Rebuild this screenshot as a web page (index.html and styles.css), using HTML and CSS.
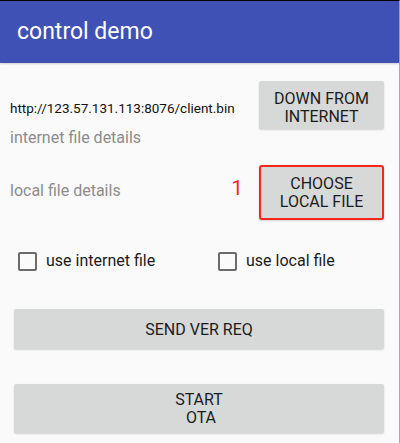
FILE: index.html
```html
<!DOCTYPE html>
<html>
<head>
<meta charset="utf-8">
<link rel="stylesheet" href="styles.css">
</head>
<body>
<div class="screen">
  <header class="appbar">control demo</header>
  <main class="content">
    <section class="row row-net">
      <div class="info">
        <div class="url">http://123.57.131.113:8076/client.bin</div>
        <div class="detail detail-net">internet file details</div>
      </div>
      <button class="btn btn-side">DOWN FROM<br>INTERNET</button>
    </section>
    <section class="row row-local">
      <div class="detail detail-local">local file details</div>
      <span class="mark">1</span>
      <button class="btn btn-side btn-marked">CHOOSE<br>LOCAL FILE</button>
    </section>
    <section class="checks">
      <label class="check"><span class="box"></span><span class="check-label">use internet file</span></label>
      <label class="check"><span class="box"></span><span class="check-label">use local file</span></label>
    </section>
    <button class="btn btn-wide btn-send">SEND VER REQ</button>
    <button class="btn btn-wide btn-ota">START<br>&nbsp;OTA</button>
  </main>
</div>
</body>
</html>
```
FILE: styles.css
```css
html, body {
  margin: 0;
  padding: 0;
  background: #fafafa;
}
body {
  font-family: Roboto, "Noto Sans", sans-serif;
  color: #1c1c1c;
  width: 400px;
  height: 443px;
  overflow: hidden;
}
.screen {
  box-sizing: border-box;
  width: 400px;
  height: 443px;
  border-top: 1px solid #000;
  border-right: 1px solid #9aabd0;
  background: #fafafa;
}
.appbar {
  height: 62px;
  background: #3f51b5;
  color: #fff;
  font-size: 23px;
  line-height: 62px;
  padding-left: 17px;
  box-shadow: 0 1px 2px rgba(0, 0, 0, 0.18);
  position: relative;
}
.content {
  display: flex;
  flex-direction: column;
  padding: 0 15px 0 10px;
}
.row {
  display: flex;
  align-items: flex-start;
}
.row-net {
  margin-top: 18px;
}
.info {
  flex: 1;
  margin-top: 19px;
}
.url {
  font-size: 13.5px;
  line-height: 16px;
  color: #111;
}
.detail {
  font-size: 16px;
  line-height: 20px;
  color: #8c8c8c;
}
.detail-net {
  margin-top: 12px;
}
.row-local {
  margin-top: 17px;
}
.detail-local {
  flex: 1;
  margin-top: 16px;
}
.mark {
  color: #f02a2a;
  font-size: 21px;
  line-height: 22px;
  margin-top: 12px;
  margin-right: 16px;
}
.btn {
  border: none;
  border-radius: 2px;
  background: #d7d8d8;
  box-shadow: 0 1px 2px rgba(0, 0, 0, 0.16);
  font-family: Roboto, "Noto Sans", sans-serif;
  font-size: 16px;
  color: #1c1c1c;
  padding: 0;
  text-align: center;
  margin: 0;
}
.btn-side {
  width: 125px;
  height: 48px;
  line-height: 18px;
  padding-top: 5px;
}
.btn-marked {
  height: 55px;
  line-height: 18px;
  border: 2px solid #f4261e;
  border-radius: 3px;
  padding-top: 0;
}
.checks {
  display: grid;
  grid-template-columns: 200px 1fr;
  margin-top: 31px;
}
.check {
  display: flex;
  align-items: center;
  padding-left: 8px;
}
.box {
  box-sizing: border-box;
  width: 19px;
  height: 19px;
  border: 2px solid #6b6b6b;
  border-radius: 2px;
  margin-right: 9px;
}
.check-label {
  font-size: 16px;
  line-height: 20px;
  color: #1c1c1c;
}
.btn-wide {
  margin-left: 4px;
  width: 370px;
}
.btn-send {
  margin-top: 38px;
  height: 40px;
}
.btn-ota {
  margin-top: 35px;
  height: 49px;
  line-height: 18px;
}
```
